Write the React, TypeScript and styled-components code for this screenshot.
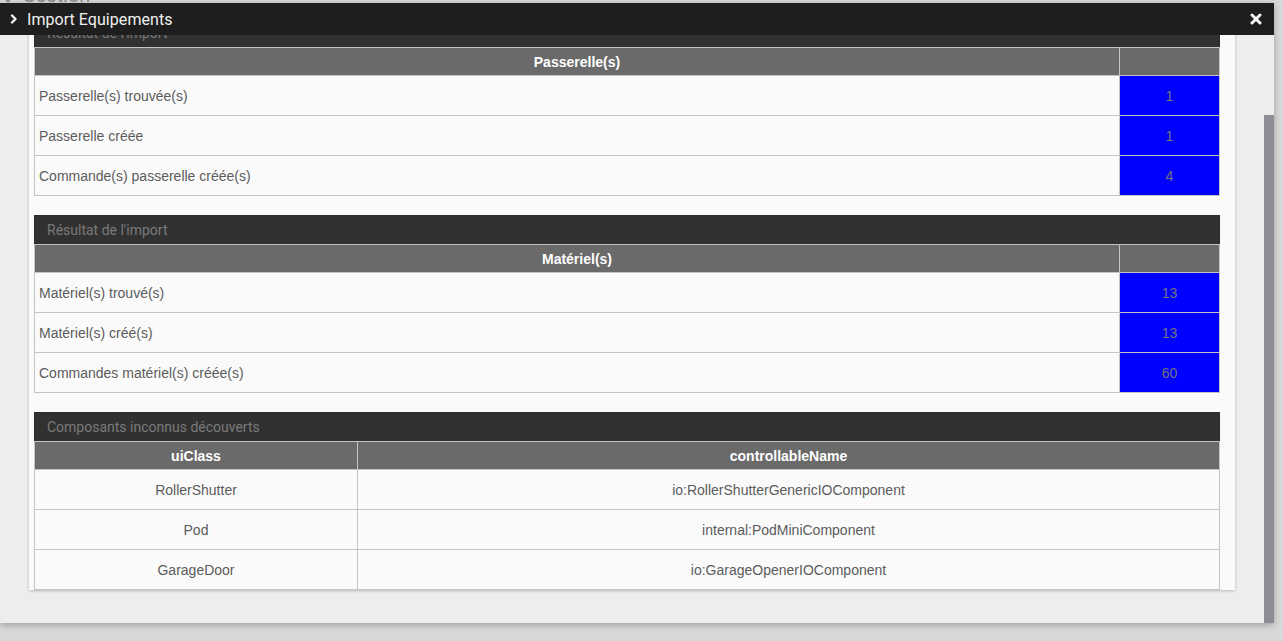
import React, { useLayoutEffect, useRef } from "react";
import styled, { createGlobalStyle } from "styled-components";

const GlobalStyle = createGlobalStyle`
  html, body {
    margin: 0;
    padding: 0;
    background: #d9d9d9;
    font-family: "Liberation Sans", Arial, sans-serif;
    overflow: hidden;
  }
`;

const Page = styled.div`
  position: relative;
  width: 1283px;
  height: 641px;
  overflow: hidden;
  background: #d9d9d9;
`;

const PageHeading = styled.div`
  display: flex;
  align-items: center;
  gap: 8px;
  margin-top: -14px;
  padding-left: 2px;
  font-family: Roboto, "Liberation Sans", sans-serif;
  font-size: 20px;
  line-height: 18px;
  color: #8c8c8c;
`;

const Dialog = styled.div`
  position: absolute;
  top: 3px;
  left: 0;
  width: 1274px;
  height: 620px;
  display: flex;
  flex-direction: column;
  background: #eceeed;
  box-shadow: 0 2px 7px rgba(0, 0, 0, 0.28);
`;

const TitleBar = styled.div`
  height: 32px;
  flex: none;
  display: flex;
  align-items: center;
  padding: 0 11px 0 10px;
  background: #1e1e1e;
  color: #f0f0f0;
  font-family: Roboto, "Liberation Sans", sans-serif;
  font-size: 16px;
`;

const TitleText = styled.span`
  flex: 1;
  margin-left: 9px;
  letter-spacing: 0.05px;
`;

const CloseButton = styled.span`
  display: flex;
  align-items: center;
  justify-content: center;
  width: 14px;
  height: 14px;
`;

const DialogBody = styled.div`
  flex: 1;
  min-height: 0;
  display: flex;
`;

const ScrollArea = styled.div`
  flex: 1;
  overflow: hidden;
  padding: 75px 29px 33px;
`;

const Scrollbar = styled.div`
  width: 10px;
  flex: none;
  display: flex;
  flex-direction: column;
  justify-content: flex-end;
  background: #eceeed;
`;

const Thumb = styled.div`
  height: 508px;
  background: #8e8d96;
`;

const Panel = styled.div`
  background: #fafafa;
  padding: 0 15px 0 5px;
  box-shadow: 0 1px 3px rgba(0, 0, 0, 0.22);
  display: flex;
  flex-direction: column;
  gap: 19px;
`;

const ResultTable = styled.table`
  width: 100%;
  border-collapse: collapse;
  table-layout: fixed;
  font-size: 14px;
  color: #5c5c5c;
`;

const Col = styled.col<{ $width?: number }>`
  width: ${(p) => (p.$width ? `${p.$width}px` : "auto")};
`;

const SectionRow = styled.tr`
  height: 29px;
`;

const SectionCell = styled.th`
  background: #313131;
  color: #7a7a7a;
  border: 1px solid #2c2c2c;
  border-bottom: 1px solid #c4c4c4;
  padding: 0 12px;
  text-align: left;
  font-family: Roboto, "Liberation Sans", sans-serif;
  font-size: 14px;
  font-weight: 400;
`;

const HeadRow = styled.tr`
  height: 28px;
`;

const HeadCell = styled.th`
  background: #6a6a6a;
  color: #ffffff;
  border: 1px solid #c4c4c4;
  font-weight: 700;
  font-size: 14px;
  text-align: center;
  padding: 0 4px;
`;

const Row = styled.tr`
  height: 40px;
`;

const Cell = styled.td<{ $align?: "left" | "center"; $highlight?: boolean }>`
  border: 1px solid #c4c4c4;
  padding: 0 4px;
  text-align: ${(p) => p.$align ?? "left"};
  background: ${(p) => (p.$highlight ? "#0000ff" : "transparent")};
  color: ${(p) => (p.$highlight ? "#74747c" : "#5c5c5c")};
`;

type CountRow = { label: string; value: number };

const CountTable: React.FC<{ title: string; heading: string; rows: CountRow[] }> = ({
  title,
  heading,
  rows,
}) => (
  <ResultTable>
    <colgroup>
      <Col />
      <Col $width={100} />
    </colgroup>
    <thead>
      <SectionRow>
        <SectionCell colSpan={2}>{title}</SectionCell>
      </SectionRow>
      <HeadRow>
        <HeadCell>{heading}</HeadCell>
        <HeadCell />
      </HeadRow>
    </thead>
    <tbody>
      {rows.map((r) => (
        <Row key={r.label}>
          <Cell>{r.label}</Cell>
          <Cell $align="center" $highlight>
            {r.value}
          </Cell>
        </Row>
      ))}
    </tbody>
  </ResultTable>
);

const unknown = [
  { ui: "RollerShutter", name: "io:RollerShutterGenericIOComponent" },
  { ui: "Pod", name: "internal:PodMiniComponent" },
  { ui: "GarageDoor", name: "io:GarageOpenerIOComponent" },
];

const ChevronIcon = () => (
  <svg width="8" height="10" viewBox="0 0 8 10">
    <polyline
      points="2,1.5 5.5,5 2,8.5"
      fill="none"
      stroke="#f0f0f0"
      strokeWidth="2.4"
      strokeLinecap="round"
      strokeLinejoin="round"
    />
  </svg>
);

const CloseIcon = () => (
  <svg width="12" height="12" viewBox="0 0 12 12">
    <path
      d="M2 2 L10 10 M10 2 L2 10"
      stroke="#f4f4f4"
      strokeWidth="3"
      strokeLinecap="round"
    />
  </svg>
);

const GearIcon = () => (
  <svg width="12" height="16" viewBox="0 0 12 16">
    <path d="M1 10 L6 16 L11 10 Z" fill="#8c8c8c" />
  </svg>
);

export default function App() {
  const scrollRef = useRef<HTMLDivElement>(null);

  useLayoutEffect(() => {
    const el = scrollRef.current;
    if (el) el.scrollTop = el.scrollHeight;
  }, []);

  return (
    <Page>
      <GlobalStyle />
      <PageHeading>
        <GearIcon />
        <span>Gestion</span>
      </PageHeading>
      <Dialog>
        <TitleBar>
          <ChevronIcon />
          <TitleText>Import Equipements</TitleText>
          <CloseButton>
            <CloseIcon />
          </CloseButton>
        </TitleBar>
        <DialogBody>
          <ScrollArea ref={scrollRef}>
            <Panel>
              <CountTable
                title="Résultat de l'import"
                heading="Passerelle(s)"
                rows={[
                  { label: "Passerelle(s) trouvée(s)", value: 1 },
                  { label: "Passerelle créée", value: 1 },
                  { label: "Commande(s) passerelle créée(s)", value: 4 },
                ]}
              />
              <CountTable
                title="Résultat de l'import"
                heading="Matériel(s)"
                rows={[
                  { label: "Matériel(s) trouvé(s)", value: 13 },
                  { label: "Matériel(s) créé(s)", value: 13 },
                  { label: "Commandes matériel(s) créée(s)", value: 60 },
                ]}
              />
              <ResultTable>
                <colgroup>
                  <Col $width={323} />
                  <Col />
                </colgroup>
                <thead>
                  <SectionRow>
                    <SectionCell colSpan={2}>Composants inconnus découverts</SectionCell>
                  </SectionRow>
                  <HeadRow>
                    <HeadCell>uiClass</HeadCell>
                    <HeadCell>controllableName</HeadCell>
                  </HeadRow>
                </thead>
                <tbody>
                  {unknown.map((u) => (
                    <Row key={u.ui}>
                      <Cell $align="center">{u.ui}</Cell>
                      <Cell $align="center">{u.name}</Cell>
                    </Row>
                  ))}
                </tbody>
              </ResultTable>
            </Panel>
          </ScrollArea>
          <Scrollbar>
            <Thumb />
          </Scrollbar>
        </DialogBody>
      </Dialog>
    </Page>
  );
}
